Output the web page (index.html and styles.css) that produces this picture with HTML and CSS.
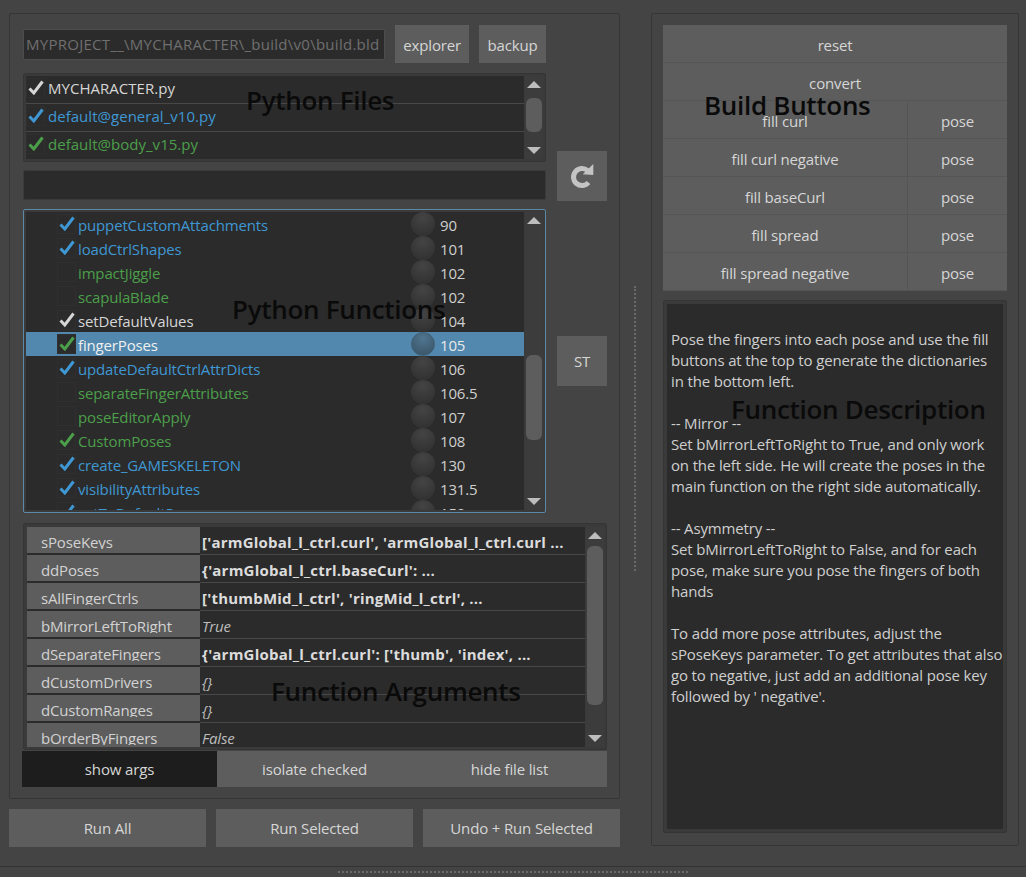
FILE: index.html
```html
<!DOCTYPE html>
<html lang="en">
<head>
  <meta charset="UTF-8">
  <title>Builder</title>
  <link rel="stylesheet" href="styles.css">
</head>
<body>
  <svg class="defs" width="0" height="0">
    <symbol id="check" viewBox="0 0 18 18">
      <path d="M2.5 9.5 L6.8 14 L15.5 2.5" fill="none" stroke="currentColor" stroke-width="3"/>
    </symbol>
  </svg>

  <div class="page">
    <div class="left-col">
      <div class="panel left-panel">
        <div class="upper">
          <div class="main-col">
            <div class="path-row">
              <div class="path-input">MYPROJECT__\MYCHARACTER\_build\v0\build.bld</div>
              <button class="btn explorer-btn">explorer</button>
              <button class="btn backup-btn">backup</button>
            </div>

            <div class="list files-list">
              <div class="rows">
                <div class="file-row white"><span class="box"><svg><use href="#check"/></svg></span>MYCHARACTER.py</div>
                <div class="file-row blue"><span class="box"><svg><use href="#check"/></svg></span>default@general_v10.py</div>
                <div class="file-row green"><span class="box"><svg><use href="#check"/></svg></span>default@body_v15.py</div>
              </div>
              <div class="scrollbar">
                <div class="arrow-up"></div>
                <div class="track"><div class="thumb files-thumb"></div></div>
                <div class="arrow-down"></div>
              </div>
              <div class="note files-note">Python Files</div>
            </div>

            <div class="search-bar"></div>

            <div class="list funcs-list">
              <div class="rows">
                <div class="func-row blue"><span class="box"><svg><use href="#check"/></svg></span><span class="func-name">puppetCustomAttachments</span><span class="dot"></span><span class="order">90</span></div>
                <div class="func-row blue"><span class="box"><svg><use href="#check"/></svg></span><span class="func-name">loadCtrlShapes</span><span class="dot"></span><span class="order">101</span></div>
                <div class="func-row green"><span class="box"></span><span class="func-name">impactJiggle</span><span class="dot"></span><span class="order">102</span></div>
                <div class="func-row green"><span class="box"></span><span class="func-name">scapulaBlade</span><span class="dot"></span><span class="order">102</span></div>
                <div class="func-row white"><span class="box"><svg><use href="#check"/></svg></span><span class="func-name">setDefaultValues</span><span class="dot"></span><span class="order">104</span></div>
                <div class="func-row green selected"><span class="box"><svg><use href="#check"/></svg></span><span class="func-name">fingerPoses</span><span class="dot"></span><span class="order">105</span></div>
                <div class="func-row blue"><span class="box"><svg><use href="#check"/></svg></span><span class="func-name">updateDefaultCtrlAttrDicts</span><span class="dot"></span><span class="order">106</span></div>
                <div class="func-row green"><span class="box"></span><span class="func-name">separateFingerAttributes</span><span class="dot"></span><span class="order">106.5</span></div>
                <div class="func-row green"><span class="box"></span><span class="func-name">poseEditorApply</span><span class="dot"></span><span class="order">107</span></div>
                <div class="func-row green"><span class="box"><svg><use href="#check"/></svg></span><span class="func-name">CustomPoses</span><span class="dot"></span><span class="order">108</span></div>
                <div class="func-row blue"><span class="box"><svg><use href="#check"/></svg></span><span class="func-name">create_GAMESKELETON</span><span class="dot"></span><span class="order">130</span></div>
                <div class="func-row blue"><span class="box"><svg><use href="#check"/></svg></span><span class="func-name">visibilityAttributes</span><span class="dot"></span><span class="order">131.5</span></div>
                <div class="func-row blue"><span class="box"><svg><use href="#check"/></svg></span><span class="func-name">setToDefaultPose</span><span class="dot"></span><span class="order">150</span></div>
              </div>
              <div class="scrollbar">
                <div class="arrow-up"></div>
                <div class="track"><div class="thumb funcs-thumb"></div></div>
                <div class="arrow-down"></div>
              </div>
              <div class="note funcs-note">Python Functions</div>
            </div>
          </div>

          <div class="side-col">
            <button class="btn side-btn refresh-btn">
              <svg width="30" height="30" viewBox="0 0 30 30">
                <path d="M21.5 21.5 A8.5 8.5 0 1 1 20.5 9.5" fill="none" stroke="#c4c4c4" stroke-width="5"/>
                <path d="M26.3 3 L26.3 14 L15.7 13.3 Z" fill="#c4c4c4"/>
              </svg>
            </button>
            <button class="btn side-btn">ST</button>
          </div>
        </div>

        <div class="list args-list">
          <div class="rows">
            <div class="arg-row"><div class="arg-name"><span>sPoseKeys</span></div><div class="arg-val bold">['armGlobal_l_ctrl.curl', 'armGlobal_l_ctrl.curl ...</div></div>
            <div class="arg-row"><div class="arg-name"><span>ddPoses</span></div><div class="arg-val bold">{'armGlobal_l_ctrl.baseCurl': ...</div></div>
            <div class="arg-row"><div class="arg-name"><span>sAllFingerCtrls</span></div><div class="arg-val bold">['thumbMid_l_ctrl', 'ringMid_l_ctrl', ...</div></div>
            <div class="arg-row"><div class="arg-name"><span>bMirrorLeftToRight</span></div><div class="arg-val ital">True</div></div>
            <div class="arg-row"><div class="arg-name"><span>dSeparateFingers</span></div><div class="arg-val bold">{'armGlobal_l_ctrl.curl': ['thumb', 'index', ...</div></div>
            <div class="arg-row"><div class="arg-name"><span>dCustomDrivers</span></div><div class="arg-val ital">{}</div></div>
            <div class="arg-row"><div class="arg-name"><span>dCustomRanges</span></div><div class="arg-val ital">{}</div></div>
            <div class="arg-row"><div class="arg-name"><span>bOrderByFingers</span></div><div class="arg-val ital">False</div></div>
          </div>
          <div class="scrollbar">
            <div class="arrow-up"></div>
            <div class="track"><div class="thumb args-thumb"></div></div>
            <div class="arrow-down"></div>
          </div>
          <div class="note args-note">Function Arguments</div>
        </div>

        <div class="tabs">
          <button class="btn tab active">show args</button>
          <button class="btn tab">isolate checked</button>
          <button class="btn tab">hide file list</button>
        </div>
      </div>

      <div class="run-row">
        <button class="btn run-btn">Run All</button>
        <button class="btn run-btn">Run Selected</button>
        <button class="btn run-btn">Undo + Run Selected</button>
      </div>
    </div>

    <div class="v-handle"></div>

    <div class="panel right-panel">
      <div class="build-btns">
        <button class="btn build-btn">reset</button>
        <button class="btn build-btn">convert</button>
        <div class="build-row"><button class="btn build-btn">fill curl</button><button class="btn build-btn pose">pose</button></div>
        <div class="build-row"><button class="btn build-btn">fill curl negative</button><button class="btn build-btn pose">pose</button></div>
        <div class="build-row"><button class="btn build-btn">fill baseCurl</button><button class="btn build-btn pose">pose</button></div>
        <div class="build-row"><button class="btn build-btn">fill spread</button><button class="btn build-btn pose">pose</button></div>
        <div class="build-row"><button class="btn build-btn">fill spread negative</button><button class="btn build-btn pose">pose</button></div>
        <div class="note build-note">Build Buttons</div>
      </div>

      <div class="desc-box">
        <div class="desc-text">
          <p>Pose the fingers into each pose and use the fill<br>buttons at the top to generate the dictionaries<br>in the bottom left.</p>
          <p>-- Mirror --<br>Set bMirrorLeftToRight to True, and only work<br>on the left side. He will create the poses in the<br>main function on the right side automatically.</p>
          <p>-- Asymmetry --<br>Set bMirrorLeftToRight to False, and for each<br>pose, make sure you pose the fingers of both<br>hands</p>
          <p>To add more pose attributes, adjust the<br>sPoseKeys parameter. To get attributes that also<br>go to negative, just add an additional pose key<br>followed by ' negative'.</p>
        </div>
        <div class="note desc-note">Function Description</div>
      </div>
    </div>
  </div>

  <div class="h-handle"><div class="h-dots"></div></div>
</body>
</html>
```

FILE: styles.css
```css
/* page */
html, body {
  margin: 0;
  height: 877px;
  overflow: hidden;
}

body {
  background-color: #444444;
  color: #d2d2d2;
  font-family: "Open Sans", sans-serif;
  font-size: 15px;
  letter-spacing: -0.15px;
}

.defs {
  position: absolute;
}

.page {
  display: flex;
  height: 853px;
  padding: 13px 0 0 9px;
}

.panel {
  border: 1px solid #353535;
  border-radius: 2px;
  box-sizing: border-box;
}

.btn {
  display: block;
  box-sizing: border-box;
  margin: 0;
  padding: 0;
  border: none;
  background-color: #5d5d5d;
  color: #d6d6d6;
  font: inherit;
  letter-spacing: inherit;
}

/* black captions lying over the widgets */
.note {
  position: absolute;
  color: #0a0a0a;
  font-size: 26px;
  font-weight: 600;
  letter-spacing: -0.3px;
  line-height: 30px;
  white-space: nowrap;
}

.files-note { left: 222px; top: 11px; }
.funcs-note { left: 208px; top: 84px; }
.args-note { left: 247px; top: 152px; }
.build-note { left: 41px; top: 65px; }
.desc-note { left: 67px; top: 93px; }

/* left side */
.left-col {
  width: 611px;
}

.left-panel {
  height: 786px;
  padding: 11px 12px 0 13px;
}

.upper {
  display: flex;
  gap: 11px;
}

.main-col {
  width: 523px;
}

.side-col {
  padding-top: 126px;
}

.side-btn {
  display: flex;
  align-items: center;
  justify-content: center;
  width: 50px;
  height: 50px;
}

.refresh-btn {
  margin-bottom: 135px;
}

.path-row {
  display: flex;
  align-items: center;
  height: 38px;
}

.path-input {
  box-sizing: border-box;
  width: 363px;
  height: 31px;
  padding-left: 2px;
  border: 1px solid #4c4c4c;
  border-radius: 2px;
  background-color: #2b2b2b;
  color: #6f6f6f;
  letter-spacing: 0.27px;
  line-height: 28px;
  white-space: nowrap;
  overflow: hidden;
}

.explorer-btn {
  width: 74px;
  height: 38px;
  margin-left: 10px;
  padding-top: 2px;
}

.backup-btn {
  width: 67px;
  height: 38px;
  margin-left: 10px;
  padding-top: 2px;
}

/* lists */
.list {
  position: relative;
  display: flex;
  box-sizing: border-box;
  padding: 2px;
  border: 1px solid #353535;
  border-radius: 2px;
  background-color: #3a3a3a;
}

.rows {
  flex: 1;
  overflow: hidden;
  background-color: #2b2b2b;
}

.scrollbar {
  display: flex;
  flex-direction: column;
  align-items: center;
  width: 18px;
  margin-left: 1px;
  background-color: #3c3c3c;
}

.track {
  flex: 1;
  width: 16px;
}

.thumb {
  border-radius: 6px;
  background-color: #5d5d5d;
}

.arrow-up,
.arrow-down {
  width: 0;
  height: 0;
  margin: 5px 0;
  border-left: 7px solid transparent;
  border-right: 7px solid transparent;
}

.arrow-up {
  border-bottom: 7px solid #bdbdbd;
}

.arrow-down {
  border-top: 7px solid #bdbdbd;
}

.white { color: #d6d6d6; }
.blue { color: #3f97d3; }
.green { color: #4c9f4a; }

.box {
  display: block;
  flex: none;
  box-sizing: border-box;
  width: 19px;
  height: 20px;
  border: 1px solid #2f2f2f;
}

.box svg {
  display: block;
  width: 18px;
  height: 18px;
}

.files-list {
  height: 89px;
  margin-top: 10px;
}

.file-row {
  display: flex;
  align-items: center;
  gap: 3px;
  box-sizing: border-box;
  height: 28px;
  padding-bottom: 4px;
  border-bottom: 1px solid #484848;
  letter-spacing: 0.03px;
}

.file-row:last-child {
  border-bottom: none;
}

.files-thumb {
  height: 34px;
  margin-top: 5px;
}

.search-bar {
  box-sizing: border-box;
  height: 30px;
  margin-top: 8px;
  border: 1px solid #3a3a3a;
  border-radius: 2px;
  background-color: #2b2b2b;
}

.funcs-list {
  height: 304px;
  margin-top: 9px;
  border-color: #5d88a6;
}

.func-row {
  display: flex;
  align-items: center;
  height: 24px;
  padding-left: 31px;
}

.func-row .func-name {
  width: 333px;
  margin-left: 2px;
  padding-top: 2px;
}

.dot {
  flex: none;
  width: 24px;
  height: 24px;
  border-radius: 50%;
  background: radial-gradient(circle at 50% 25%, #444444, #333333 75%);
}

.order {
  margin-left: 5px;
  padding-top: 2px;
  color: #cfcfcf;
}

.selected {
  background-color: #5288ad;
}

.selected .func-name {
  color: #f0f0f0;
}

.selected .order {
  color: #e8e8e8;
}

.selected .box {
  background-color: #2b2b2b;
}

.selected .dot {
  background: radial-gradient(circle at 50% 25%, #50758f, #3d5a6e 75%);
  border: 1px solid #3f5f75;
  box-sizing: border-box;
}

.funcs-thumb {
  height: 85px;
  margin-top: 126px;
}

/* arguments */
.args-list {
  height: 227px;
  margin-top: 10px;
  padding: 3px 2px 2px 3px;
}

.arg-row {
  display: flex;
  height: 28px;
}

.arg-name {
  box-sizing: border-box;
  width: 173px;
  height: 26px;
  padding-left: 14px;
  background-color: #5d5d5d;
  color: #d2d2d2;
}

.arg-name span {
  display: block;
  height: 22px;
  line-height: 30px;
  overflow: hidden;
  white-space: nowrap;
}

.arg-val {
  flex: 1;
  box-sizing: border-box;
  height: 28px;
  padding-left: 2px;
  border-bottom: 1px solid #484848;
  line-height: 30px;
  white-space: nowrap;
  overflow: hidden;
}

.bold {
  font-weight: 700;
  color: #dcdcdc;
  letter-spacing: 0.22px;
}

.ital {
  font-style: italic;
  color: #bdbdbd;
}

.args-thumb {
  height: 159px;
  margin-top: 2px;
}

.tabs {
  display: flex;
  margin: 1px 0 0 -1px;
}

.tab {
  width: 195px;
  height: 36px;
}

.tab.active {
  background-color: #1d1d1d;
}

.run-row {
  display: flex;
  gap: 10px;
  margin-top: 10px;
}

.run-btn {
  width: 197px;
  height: 38px;
}

/* splitters */
.v-handle {
  width: 0;
  height: 285px;
  margin: 273px 15px 0 14px;
  border-left: 2px dotted #6a6a6a;
}

.h-handle {
  height: 11px;
  border-top: 1px solid #333333;
}

.h-dots {
  width: 350px;
  margin: 4px 0 0 338px;
  border-top: 2px dotted #6a6a6a;
}

/* right side */
.right-panel {
  display: flex;
  flex-direction: column;
  width: 368px;
  height: 833px;
  padding: 11px 11px 0;
}

.build-btns {
  position: relative;
}

.build-btn {
  width: 100%;
  height: 38px;
  padding-top: 3px;
  border-bottom: 1px solid #555555;
}

.build-row {
  display: flex;
}

.pose {
  flex: none;
  width: 100px;
  border-left: 1px solid #555555;
}

.desc-box {
  position: relative;
  box-sizing: border-box;
  height: 533px;
  margin-top: 9px;
  padding: 3px;
  border: 1px solid #353535;
  border-radius: 2px;
  background-color: #3a3a3a;
}

.desc-text {
  box-sizing: border-box;
  height: 100%;
  padding: 25px 4px 0;
  background-color: #2b2b2b;
  color: #cfcfcf;
  line-height: 21px;
  white-space: nowrap;
}

.desc-text p {
  margin: 0 0 21px;
}
```
